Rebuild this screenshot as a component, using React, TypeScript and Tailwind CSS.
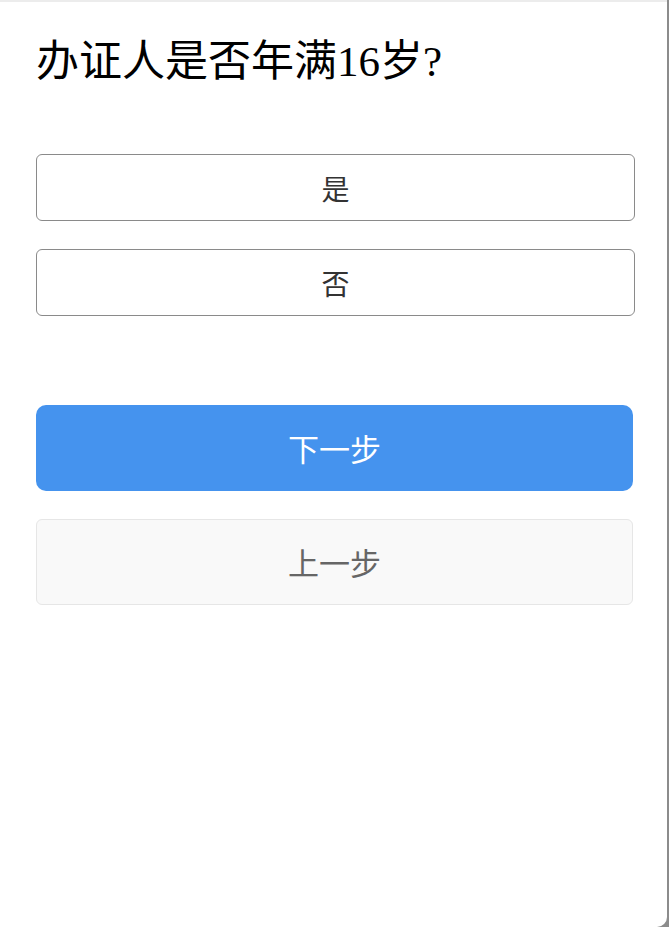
export default function App() {
  const options = ['是', '否'];

  return (
    <div className="w-[669px] h-[927px] bg-[#8c8c8c]" style={{ fontFamily: '"Liberation Serif", "Noto Sans CJK SC", serif' }}>
      <div className="mr-[2px] h-full bg-white border-t-2 border-[#ececec] rounded-br-[10px] px-9 pt-[32px]">
        {/* 问题标题 */}
        <h1 className="text-[43px] leading-[56px] text-black">办证人是否年满16岁?</h1>

        {/* 选项 */}
        <div className="mt-[64px] flex flex-col gap-[28px]">
          {options.map(opt => (
            <button
              key={opt}
              className="w-[599px] h-[67px] border border-[#8a8a8a] rounded-[6px] bg-white text-[28px] text-[#333] flex items-center justify-center"
              style={{ fontFamily: '"Noto Sans CJK SC", sans-serif' }}
            >
              {opt}
            </button>
          ))}
        </div>

        {/* 操作按钮 */}
        <div className="mt-[89px] flex flex-col gap-[28px]" style={{ fontFamily: '"Noto Sans CJK SC", sans-serif' }}>
          <button className="w-[597px] h-[86px] rounded-[10px] bg-[#4593ee] text-white text-[31px] flex items-center justify-center">
            下一步
          </button>
          <button className="w-[597px] h-[86px] rounded-[6px] bg-[#f9f9f9] border border-[#e6e6e6] text-[#666] text-[31px] flex items-center justify-center">
            上一步
          </button>
        </div>
      </div>
    </div>
  );
}
